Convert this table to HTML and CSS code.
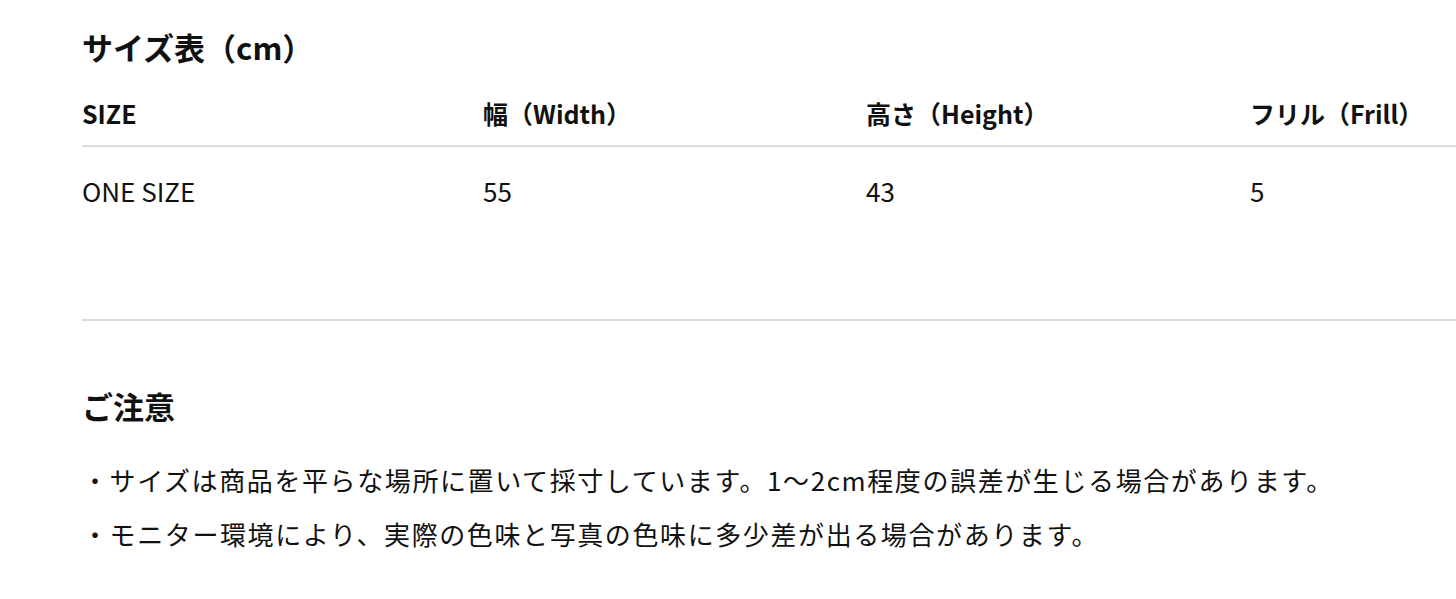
FILE: index.html
```html
<!DOCTYPE html>
<html lang="ja">
<head>
<meta charset="utf-8">
<link rel="stylesheet" href="styles.css">
</head>
<body>
<main class="page">
  <h2 class="title">サイズ表（cm）</h2>
  <div class="size-table">
    <div class="row head">
      <div class="cell">SIZE</div>
      <div class="cell">幅（Width）</div>
      <div class="cell">高さ（Height）</div>
      <div class="cell">フリル（Frill）</div>
    </div>
    <div class="row body">
      <div class="cell">ONE SIZE</div>
      <div class="cell">55</div>
      <div class="cell">43</div>
      <div class="cell">5</div>
    </div>
  </div>
  <h2 class="title notice-title">ご注意</h2>
  <ul class="notes">
    <li>・サイズは商品を平らな場所に置いて採寸しています。1～2cm程度の誤差が生じる場合があります。</li>
    <li>・モニター環境により、実際の色味と写真の色味に多少差が出る場合があります。</li>
  </ul>
</main>
</body>
</html>
```
FILE: styles.css
```css
html, body {
  margin: 0;
  padding: 0;
  background: #fff;
  overflow: hidden;
}
body {
  font-family: "Noto Sans CJK JP", "Noto Sans", sans-serif;
  color: #111;
}
.page {
  padding: 24px 0 0 82px;
}
.title {
  margin: 0;
  font-size: 31px;
  line-height: 45px;
  font-weight: 700;
}
.size-table {
  width: 1600px;
  margin-top: 26px;
  border-bottom: 2px solid #ddd;
}
.row {
  display: grid;
  grid-template-columns: 401px 383px 384px 432px;
  line-height: 36px;
}
.row.head {
  font-size: 25px;
  font-weight: 700;
  padding-bottom: 14px;
  border-bottom: 2px solid #ddd;
}
.row.body {
  font-size: 26px;
  padding-top: 26px;
  padding-bottom: 110px;
}
.notice-title {
  margin-top: 62px;
}
.notes {
  list-style: none;
  margin: 25px 0 0;
  padding: 0;
  font-size: 26px;
  line-height: 54px;
  letter-spacing: 1.6px;
}
```
